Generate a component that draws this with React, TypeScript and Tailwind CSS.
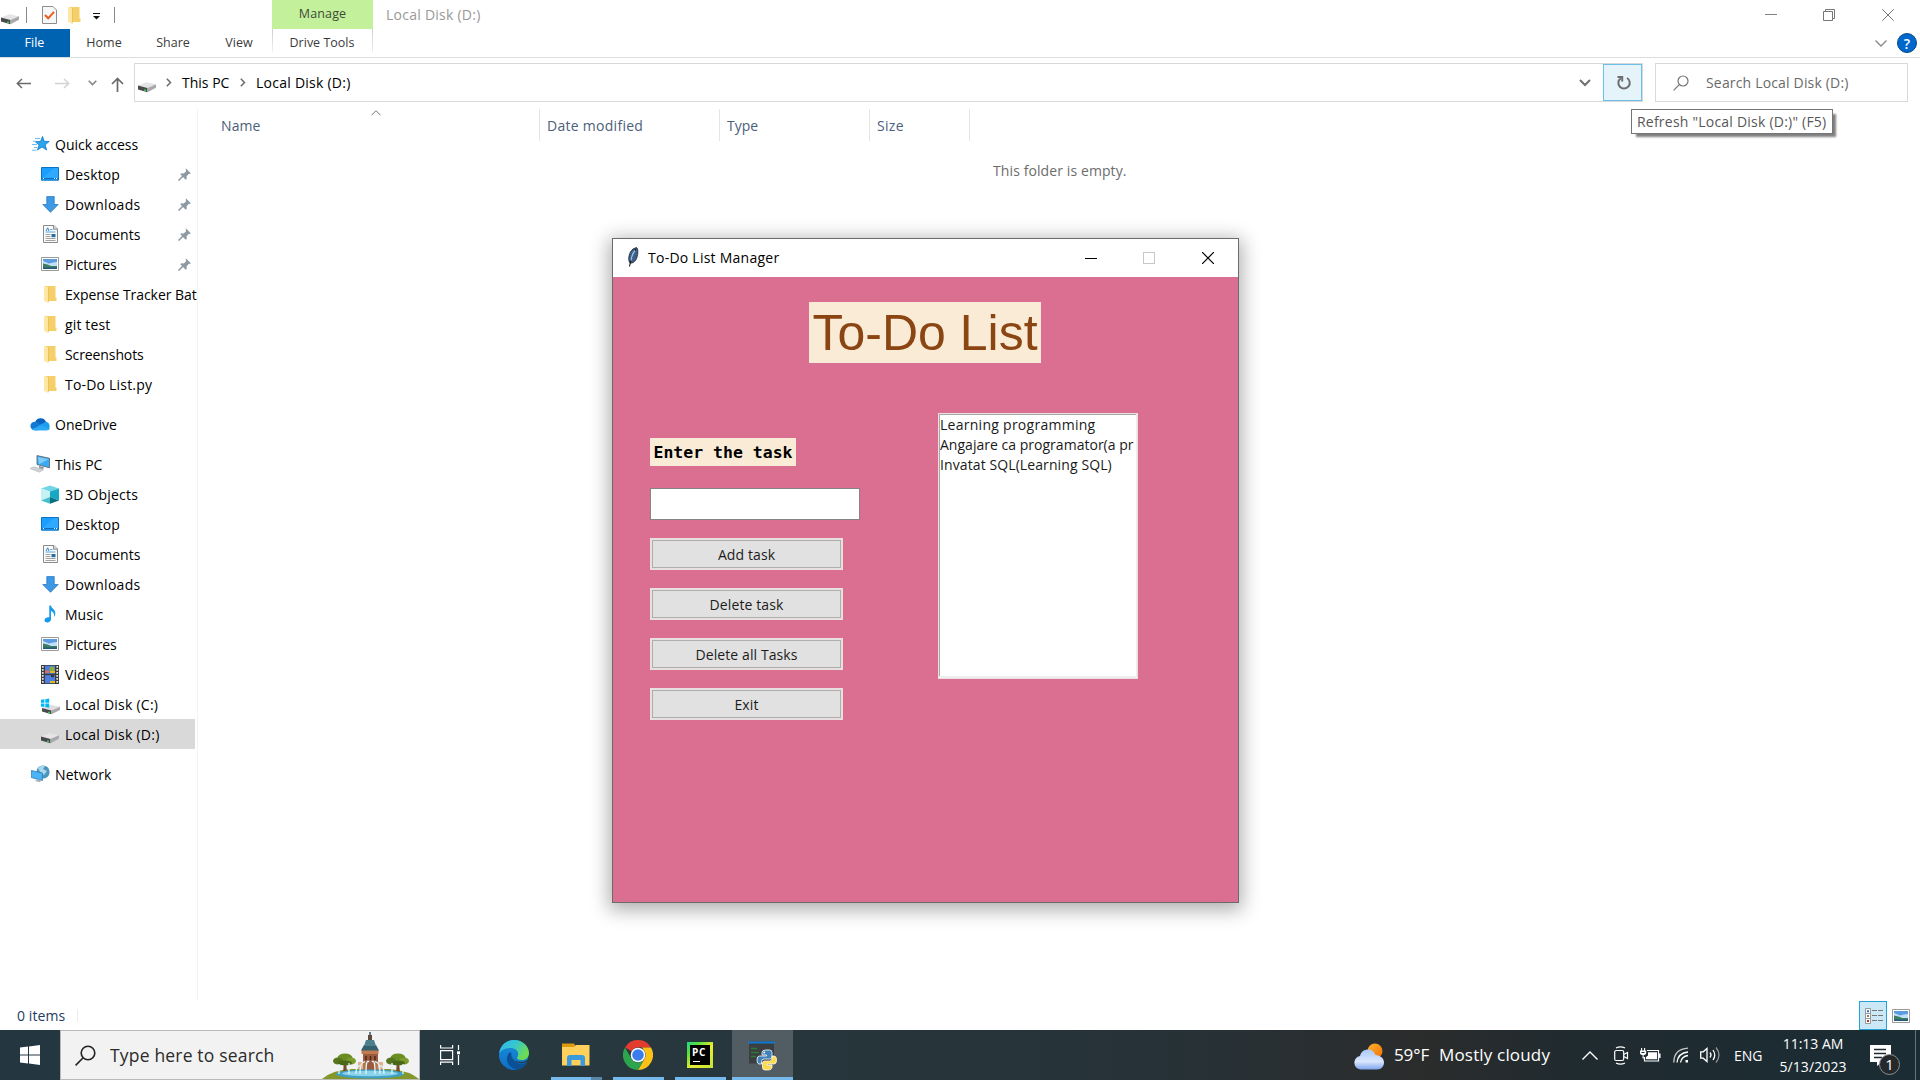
import React from "react";

type P = { className?: string };

const Drive = ({ className = "" }: P) => (
  <svg className={`h-5 w-[18px] shrink-0 ${className}`} viewBox="0 0 18 20">
    <path d="M0 10.5 8.5 7.2 18 9.2 9.5 13Z" fill="#e4e4e6" />
    <path d="M0 10.5 9.5 13v4.2L0 14.4Z" fill="#4a4a4c" />
    <path d="M9.5 13 18 9.2v3.6l-8.5 4.4Z" fill="#a9a9ad" />
    <path d="M6 14.6h2v1.5H6z" fill="#35d04a" />
  </svg>
);
const DriveC = () => (
  <svg className="h-5 w-[19px] shrink-0" viewBox="0 0 19 20">
    <path d="M1 12 9.5 8.7 19 10.7 10.5 14.5Z" fill="#dedee0" />
    <path d="M1 12 10.5 14.5v3.8L1 15.6Z" fill="#4a4a4c" />
    <path d="M10.5 14.5 19 10.7v3.4l-8.5 4.2Z" fill="#a9a9ad" />
    <path d="M7 15.8h2v1.4H7z" fill="#35d04a" />
    <path d="M0 3.800 3.400 3.300V6.700H0zM4.300 3.200 8.200 2.600V6.700H4.300zM0 7.600H3.400V11L0 10.500zM4.300 7.600H8.200V11.700L4.300 11.100z" fill="#00b7f1" />
  </svg>
);
const Folder = ({ className = "" }: P) => (
  <svg className={`h-[18px] w-[13px] shrink-0 ${className}`} viewBox="0 0 13 18">
    <path d="M2 1h9.500v11.500h1V16H4z" fill="#f5cf69" />
    <path d="M0 .5 4 2.500V18L0 15.800z" fill="#ffe7a3" />
    <path d="M4 2.500 5 2v14l-1 2z" fill="#e9c35c" />
  </svg>
);
const Star = () => (
  <svg className="h-[18px] w-[19px] shrink-0" viewBox="0 0 19 18">
    <path d="m11.500 1.500 1.700 4.800 5 .2-4 3.300 1.400 5.200-4.600-3L6.500 15l1.600-5-3.800-3.300 5.200-.3z" fill="#2ca4ee" stroke="#1279c4" strokeWidth=".8" />
    <path d="M4 3.500h5M2 6.300h3M1 9.500h5M3 12.500h3.500M1 15.200h4.500" stroke="#6cbcf0" strokeWidth="1" />
  </svg>
);
const Desktop = () => (
  <svg className="h-[14px] w-[18px] shrink-0" viewBox="0 0 18 14">
    <path d="M.5.5h17v12.700H.5z" fill="#1a9fff" stroke="#0c74c4" />
    <path d="m1 12 12-11H17v11z" fill="#3db0ff" opacity=".6" />
    <path d="M1 11.500h16" stroke="#0b6fbd" />
    <path d="M2 11.500h1M13 11.500h1M15 11.500h1" stroke="#fff" />
  </svg>
);
const Down = () => (
  <svg className="h-[17px] w-[17px] shrink-0" viewBox="0 0 17 17">
    <path d="M4.800.6h7.400v7.900h4L8.500 16.300.8 8.500h4z" fill="#3d99e6" stroke="#2a79c2" strokeWidth=".8" />
  </svg>
);
const Doc = () => (
  <svg className="h-[18px] w-[15px] shrink-0" viewBox="0 0 15 18">
    <path d="M.5.5h10.500l3.500 3.500v13.500H.5z" fill="#fbfbfb" stroke="#8b8b8b" />
    <path d="M10.500.8V4.200h3.700" fill="#ddd" stroke="#8b8b8b" />
    <path d="M3 6 4.700 2.800 6 6" fill="none" stroke="#2786cf" />
    <path d="M7 4.500h2.500M2.500 7h10" stroke="#55a5e0" />
    <path d="M2.500 9.500h5M2.500 11.500h5M2.500 13.500h10M2.500 15.500h10" stroke="#a2a2a2" />
    <path d="M8.500 9h4v3.200h-4z" fill="#2b6f9f" />
  </svg>
);
const Pic = () => (
  <svg className="h-[14px] w-[18px] shrink-0" viewBox="0 0 18 14">
    <path d="M.5.5h17v13H.5z" fill="#fff" stroke="#9a9a9a" />
    <path d="M2 2h14v10H2z" fill="#bfe0f8" />
    <path d="M2 2h14v3q-4 0-8 1.500L2 4z" fill="#5d9be0" />
    <path d="M2 6.500q5 .5 8 2.500h6v3H2z" fill="#3f7d63" />
    <path d="M2 10.500h14V12H2z" fill="#235a7c" />
  </svg>
);
const Cloud = () => (
  <svg className="h-[14px] w-[21px] shrink-0" viewBox="0 0 21 14">
    <path d="M5 6a5.700 5.700 0 0 1 10.800-1.500L18 8l-9 3z" fill="#0b63bd" />
    <path d="M4.500 13.300A4.300 4.300 0 0 1 5 4.700c2 0 3 .8 5 2.300l4 3-6 3.300z" fill="#1179d4" />
    <path d="M16 4.800a4.500 4.500 0 0 1 1 8.500H4.500C6 10 10 7.500 11.500 7z" fill="#1e9cee" />
    <path d="M1.700 12 12 8.500l8 3.300q-1.200 1.500-3 1.500H4.500q-1.800 0-2.800-1.300z" fill="#2ba9f5" />
  </svg>
);
const PC = () => (
  <svg className="h-[18px] w-[20px] shrink-0" viewBox="0 0 20 18">
    <path d="m7 .6 12.500 2.700v9.500L7 9.500z" fill="#3aa9f3" stroke="#5f6b75" strokeWidth=".9" />
    <path d="m8 2 10.500 2.200-9.500 5z" fill="#7fccfb" />
    <path d="m9 11 5 1.200-1 2-4-1z" fill="#8e959b" />
    <path d="m0 13.500 4-1.700 9.500 3-4 2.400z" fill="#cfd3d6" stroke="#a9adb0" strokeWidth=".5" />
  </svg>
);
const Cube = () => (
  <svg className="h-[19px] w-[18px] shrink-0" viewBox="0 0 18 19">
    <path d="M0 3.500 9 .5l9 3-9 3z" fill="#6fd6e2" />
    <path d="M0 3.500 9 6.500V12L0 15.500z" fill="#c4f2f4" />
    <path d="m9 6.500 9-3v12L9 12z" fill="#17a8c4" />
    <path d="m0 15.500 9-3.500v6.800z" fill="#45bfcb" />
    <path d="m9 12 9 3.500-9 3.300z" fill="#086f81" />
  </svg>
);
const Music = () => (
  <svg className="h-[18px] w-[12px] shrink-0" viewBox="0 0 12 18">
    <path d="M5.300.5H7c.3 3 4.800 4 4.300 8.500-.1 1.300-.6 2-1.300 2.700.6-3.300-.8-4.700-3-5.700v8.300c0 2-1.700 3.200-3.700 3.200C1.400 17.500.3 16.400.5 15c.2-1.900 2.500-3.200 4.800-2.700z" fill="#159aee" />
  </svg>
);
const Video = () => (
  <svg className="h-[19px] w-[18px] shrink-0" viewBox="0 0 18 19">
    <path d="M0 0h18v19H0z" fill="#3c3c3c" />
    <path d="M4 .8h10v8H4zM4 10.200h10v8H4z" fill="#4e7fe0" />
    <path d="M1.800 1v18M16.200 1v18" stroke="#e5e5e5" strokeWidth="1.700" strokeDasharray="1.700 1.300" />
    <circle cx="11" cy="4" r="2.500" fill="#8fae35" /><path d="M9 6h5v2H9zM9 16h5v2H9z" fill="#e2b622" />
    <path d="M4 5.500h4v2.500H4z" fill="#e56b61" /><path d="M10 10.200h3v2h-3z" fill="#333" />
  </svg>
);
const Network = () => (
  <svg className="h-[18px] w-[19px] shrink-0" viewBox="0 0 19 18">
    <circle cx="12" cy="7" r="6.600" fill="#4d95bd" />
    <path d="M7 3q5-4 7-2l-2 3 4 2-3 4-4-3z" fill="#a7d8ee" />
    <path d="m.4 5.500 11 2.500v7.500l-11-3z" fill="#4bb4f5" stroke="#2a7eb5" strokeWidth=".8" />
    <path d="m6 14.300 4 1-1 2-5-1.300z" fill="#aab4ba" />
  </svg>
);
const Pin = () => (
  <svg className="h-[13px] w-[13px] shrink-0" viewBox="0 0 13 13">
    <path d="M7.800.3 12.800 5.200l-1 .8-.9-.2-2.300 2.400.2 2.500-1.100 1L2.300 6.300l1-1 2.500.2 2.300-2.300-.3-1.100z" fill="#8d99a3" />
    <path d="m5 8-4.500 4.600" stroke="#8d99a3" strokeWidth="1.500" />
  </svg>
);
const Right = ({ className = "" }: P) => (
  <svg className={`h-[9px] w-[6px] shrink-0 ${className}`} viewBox="0 0 6 9" fill="none" stroke="#6b6b6b" strokeWidth="1.500">
    <path d="m.8.8 3.700 3.700L.8 8.200" />
  </svg>
);

type Row = { icon: React.ReactNode; label: string; cls?: string; pin?: boolean; root?: boolean; sel?: boolean; gap?: boolean };
const rows: Row[] = [
  { icon: <Star />, label: "Quick access", root: true },
  { icon: <Desktop />, label: "Desktop", pin: true, cls: "tracking-[0.15px]" },
  { icon: <Down />, label: "Downloads", pin: true, cls: "tracking-[0.27px]" },
  { icon: <Doc />, label: "Documents", pin: true, cls: "tracking-[0.07px]" },
  { icon: <Pic />, label: "Pictures", pin: true, cls: "tracking-[-0.1px]" },
  { icon: <Folder />, label: "Expense Tracker Bat", cls: "tracking-[-0.05px]" },
  { icon: <Folder />, label: "git test", cls: "tracking-[0.15px]" },
  { icon: <Folder />, label: "Screenshots", cls: "tracking-[-0.1px]" },
  { icon: <Folder />, label: "To-Do List.py", cls: "tracking-[0.2px]" },
  { icon: <Cloud />, label: "OneDrive", root: true, gap: true, cls: "tracking-[0.05px]" },
  { icon: <PC />, label: "This PC", root: true, gap: true },
  { icon: <Cube />, label: "3D Objects", cls: "tracking-[0.2px]" },
  { icon: <Desktop />, label: "Desktop", cls: "tracking-[0.15px]" },
  { icon: <Doc />, label: "Documents", cls: "tracking-[0.07px]" },
  { icon: <Down />, label: "Downloads", cls: "tracking-[0.27px]" },
  { icon: <Music />, label: "Music" },
  { icon: <Pic />, label: "Pictures", cls: "tracking-[-0.1px]" },
  { icon: <Video />, label: "Videos", cls: "tracking-[0.2px]" },
  { icon: <DriveC />, label: "Local Disk (C:)", cls: "tracking-[0.25px]" },
  { icon: <Drive />, label: "Local Disk (D:)", sel: true, cls: "tracking-[0.25px]" },
  { icon: <Network />, label: "Network", root: true, gap: true, cls: "tracking-[0.1px]" },
];

function TitleBar() {
  return (
    <div className="flex h-[29px] items-center">
      <div className="flex w-[272px] items-center">
        <Drive className="ml-px mt-1" />
        <div className="ml-[7px] h-4 w-px bg-[#8a8a8a]" />
        <svg className="ml-[15px] h-[18px] w-[15px]" viewBox="0 0 15 18">
          <path d="M.5.500h10.500l3.500 3.500v13.500H.5z" fill="#f6f7f9" stroke="#8d8d8d" />
          <path d="m3 9 3.200 3.300L12 5.800" fill="none" stroke="#ee5a1c" strokeWidth="2" />
        </svg>
        <Folder className="ml-[11px]" />
        <svg className="ml-[12px] mt-[3px] h-[7px] w-[7px]" viewBox="0 0 7 7">
          <path d="M0 .5h7" stroke="#111" /><path d="M0 3h7L3.500 6.500z" fill="#111" />
        </svg>
        <div className="ml-[14px] h-4 w-px bg-[#8a8a8a]" />
      </div>
      <div className="flex h-full w-[101px] items-center justify-center bg-[#c3f09b] pb-px text-[12.500px] tracking-[0.15px] text-[#3f4a38]">Manage</div>
      <div className="ml-[13px] flex-1 pb-px text-[14px] tracking-[0.25px] text-[#999]">Local Disk (D:)</div>
      <div className="flex items-center text-[#777]">
        <div className="h-px w-3 bg-[#808080]" />
        <svg className="ml-[46px] h-3 w-3" viewBox="0 0 12 12" fill="none" stroke="#777">
          <path d="M.5 2.500h9v9h-9zM2.500 2.500V.5h9v9h-2" />
        </svg>
        <svg className="ml-[47px] mr-[26px] h-3 w-3" viewBox="0 0 12 12" stroke="#777">
          <path d="m.3.300 11.400 11.400M11.700.3.300 11.700" />
        </svg>
      </div>
    </div>
  );
}

function Ribbon() {
  return (
    <div className="flex h-[29px] border-b border-[#dcdddd] text-[12.500px] text-[#3b3b3b]">
      <div className="flex w-[70px] items-center justify-center bg-[#0063b1] pr-px pt-px text-white">File</div>
      <div className="flex w-[68px] items-center justify-center pt-px">Home</div>
      <div className="flex w-[70px] items-center justify-center pt-px">Share</div>
      <div className="flex w-[62px] items-center justify-center pt-px">View</div>
      <div className="ml-[2px] flex w-[101px]">
        <div className="h-[23px] w-px bg-[linear-gradient(180deg,#cfcfcf,#f0f0f0)]" />
        <div className="flex flex-1 items-center justify-center pr-px pt-px">Drive Tools</div>
        <div className="h-[23px] w-px bg-[linear-gradient(180deg,#cfcfcf,#f0f0f0)]" />
      </div>
      <div className="flex-1" />
      <svg className="mr-[10px] mt-[11px] h-[7px] w-3 shrink-0" viewBox="0 0 12 7" fill="none" stroke="#8a8a8a" strokeWidth="1.400"><path d="m.5.500 5.500 5.500 5.500-5.500" /></svg>
      <div className="mr-[3px] mt-1 flex size-5 items-center justify-center rounded-full border border-[#0a4a86] bg-[#0067cc] text-[14px] font-semibold text-white">?</div>
    </div>
  );
}

function AddressBar() {
  return (
    <div className="flex h-[44px] items-end">
      <div className="flex h-[38px] w-[134px] items-center">
        <svg className="ml-4 h-[11px] w-[15px]" viewBox="0 0 15 11" fill="none" stroke="#6a6a6a" strokeWidth="1.500"><path d="M15 5.500H1.500M6 1 1.300 5.500 6 10" /></svg>
        <svg className="ml-6 h-[11px] w-[15px]" viewBox="0 0 15 11" fill="none" stroke="#d2d2d2" strokeWidth="1.500"><path d="M0 5.500h13.500M9 1l4.700 4.500L9 10" /></svg>
        <svg className="ml-[18px] h-[6px] w-[9px]" viewBox="0 0 9 6" fill="none" stroke="#888" strokeWidth="1.600"><path d="m.7.700 3.800 3.800L8.300.7" /></svg>
        <svg className="ml-[14px] mt-[3px] h-[15px] w-[13px]" viewBox="0 0 13 15" fill="none" stroke="#6a6a6a" strokeWidth="1.700"><path d="M6.500 15V1.500M1 7l5.500-5.600L12 7" /></svg>
      </div>
      <div className="flex h-[39px] w-[1509px] items-center border border-[#d9d9d9] text-[14px] text-black">
        <Drive className="ml-[3px] mt-1" />
        <Right className="ml-[10px]" />
        <div className="ml-[10px] w-[47px] whitespace-nowrap">This PC</div>
        <Right className="ml-[11px]" />
        <div className="ml-[10px] flex-1 tracking-[0.25px]">Local Disk (D:)</div>
        <svg className="mr-3 mt-px h-[8px] w-[12px]" viewBox="0 0 12 8" fill="none" stroke="#707070" strokeWidth="2"><path d="m1 1 5 5 5-5" /></svg>
        <div className="flex h-[37px] w-[39px] items-center justify-center border border-[#6dbfe8] bg-[#e5f3fb] pl-[2px] pt-px">
          <svg className="h-4 w-4" viewBox="0 0 16 16" fill="none" stroke="#6e6e6e" strokeWidth="2">
            <path d="M11 3a5.700 5.700 0 1 1-6.200.2" /><path d="M1.500 2h4.700v4.500" />
          </svg>
        </div>
      </div>
      <div className="ml-3 flex h-[39px] w-[253px] items-center border border-[#d9d9d9]">
        <svg className="ml-[17px] h-4 w-4" viewBox="0 0 16 16" fill="none" stroke="#757575" strokeWidth="1.200"><circle cx="10" cy="6" r="5" /><path d="M6.300 9.700.6 15.400" /></svg>
        <div className="ml-[17px] text-[14px] tracking-[0.17px] text-[#6a6a6a]">Search Local Disk (D:)</div>
      </div>
    </div>
  );
}

function Sidebar() {
  return (
    <div className="mt-[7px] h-[891px] w-[198px] border-r border-[#f3f3f3] pt-[20px]">
      <div className="w-[195px] text-[14px] text-black">
        {rows.map((r, i) => (
          <div key={i} className={`flex h-[30px] items-center ${r.gap ? "mt-[10px]" : ""} ${r.sel ? "bg-[#d9d9d9]" : ""}`}>
            <div className={`flex w-5 shrink-0 items-center justify-center ${r.root ? "ml-[30px]" : "ml-[40px]"} ${r.label.startsWith("Local") ? "pt-1" : ""}`}>{r.icon}</div>
            <div className={`ml-[5px] flex-1 whitespace-nowrap ${r.cls ?? ""}`}>{r.label}</div>
            {r.pin && <div className="mr-[4px]"><Pin /></div>}
          </div>
        ))}
      </div>
    </div>
  );
}

function Content() {
  return (
    <div className="flex flex-1 flex-col pt-[7px]">
      <div className="flex h-[32px] text-[14px] text-[#4c607a]">
        <div className="flex w-[342px] border-r border-[#e5e5e5]">
          <div className="ml-[23px] w-[150px] pt-[6px] tracking-[0.1px]">Name</div>
          <svg className="mt-px h-[6px] w-[10px]" viewBox="0 0 10 6" fill="none" stroke="#777"><path d="m.5 5.200 4.500-4.500 4.500 4.500" /></svg>
        </div>
        <div className="w-[180px] border-r border-[#e5e5e5] pl-[7px] pt-[6px] tracking-[0.28px]">Date modified</div>
        <div className="w-[150px] border-r border-[#e5e5e5] pl-[7px] pt-[6px]">Type</div>
        <div className="w-[100px] border-r border-[#e5e5e5] pl-[7px] pt-[6px] tracking-[0.3px]">Size</div>
      </div>
      <div className="ml-[795px] mt-[19px] text-[14px] tracking-[0.1px] text-[#6d6d6d]">This folder is empty.</div>
    </div>
  );
}

function TaskButton({ label }: { label: string }) {
  return (
    <div className="mb-[18px] flex h-8 w-[193px] border-2 border-[#e8dfe1] bg-[#e1e1e1]">
      <div className="flex flex-1 items-center justify-center border border-[#adadad] text-[14px] tracking-[0.1px] text-[#1c1c1c]">{label}</div>
    </div>
  );
}

function TodoWindow() {
  return (
    <div className="absolute left-[612px] top-[238px] flex h-[665px] w-[627px] flex-col border border-[#6b6b6b] bg-[#db6f91] shadow-[0_4px_18px_3px_rgba(0,0,0,0.32)]">
      <div className="flex h-[38px] items-center bg-white text-black">
        <svg className="ml-[13px] mb-[2px] h-5 w-[13px]" viewBox="0 0 13 20">
          <path d="M10.500.5c2 1 1.700 8.500-.8 12.500-1.500 2.400-4 3.500-5.700 3C1.500 13 3 5 7 2z" fill="#3c5f8c" stroke="#242c36" strokeWidth=".9" />
          <path d="M10 2C6 6 5 12 3.500 19.500" stroke="#171717" fill="none" strokeWidth="1.100" />
          <path d="M9 3.500C7 6 5.500 10 5 13.500" stroke="#9cc0e8" fill="none" strokeWidth="1.400" />
        </svg>
        <div className="ml-[9px] flex-1 pb-[2px] text-[14px] tracking-[0.25px]">To-Do List Manager</div>
        <div className="h-px w-3 bg-black" />
        <div className="ml-[46px] size-3 border border-[#c8c8c8]" />
        <svg className="ml-[47px] mr-[24px] size-3" viewBox="0 0 12 12" stroke="#000" strokeWidth="1.200"><path d="m0 0 12 12M12 0 0 12" /></svg>
      </div>
      <div className="flex h-[147px] pt-[25px]">
        <div className="ml-[196px] flex h-[61px] w-[232px] items-center justify-center whitespace-nowrap bg-[#faebd7] font-['Liberation_Sans'] text-[50px] leading-none text-[#8b4513]">To-Do List</div>
      </div>
      <div className="flex">
        <div className="ml-[37px] w-[288px] pt-[14px]">
          <div className="flex h-7 w-[146px] items-center justify-center whitespace-nowrap bg-[#faebd7] pt-[2px] font-['DejaVu_Sans_Mono'] text-[16.5px] font-bold text-black">Enter the task</div>
          <div className="mb-[18px] mt-[22px] h-8 w-[210px] border border-[#848484] bg-white" />
          <TaskButton label="Add task" />
          <TaskButton label="Delete task" />
          <TaskButton label="Delete all Tasks" />
          <TaskButton label="Exit" />
        </div>
        <div className="mt-[-11px] flex h-[266px] w-[200px] border border-[#ecdfe3] bg-[#eee]">
          <div className="mb-[2px] mr-px flex-1 whitespace-nowrap border-l border-t border-[#a9a9a9] bg-white text-[14px] leading-5 text-[#1a1a1a]">
            <div className="tracking-[0.27px]">Learning programming</div>
            <div className="tracking-[0.02px]">Angajare ca programator(a pr</div>
            <div className="tracking-[0.1px]">Invatat SQL(Learning SQL)</div>
          </div>
        </div>
      </div>
    </div>
  );
}

const Tree = ({ x }: { x: number }) => (
  <g transform={`translate(${x} 0)`}>
    <path d="M11 30 10 42h4l-1-12z" fill="#7a4c26" />
    <ellipse cx="12" cy="27" rx="7.500" ry="4.500" fill="#6b8e23" />
    <ellipse cx="5" cy="30" rx="5" ry="3.500" fill="#55761c" />
    <ellipse cx="18" cy="30" rx="5" ry="3.500" fill="#7b9c2c" />
    <ellipse cx="12" cy="32" rx="7" ry="2.500" fill="#4a6818" />
  </g>
);

function SearchArt() {
  return (
    <svg className="h-[48px] w-[97px] shrink-0" viewBox="0 0 97 48">
      <path d="M0 48Q10 39 30 38h38q20 2 29 10z" fill="#84972b" />
      <path d="M41 19h15v22H41z" fill="#9a5a3e" />
      <path d="M39.500 19h17v4h-17z" fill="#c27a50" />
      <path d="M42 14h12l3 5.500H39z" fill="#35606d" />
      <path d="M44 9h8l2 6H42z" fill="#4b7f8c" />
      <path d="M47.300 1h1.500v7h-1.500z" fill="#31535d" />
      <path d="M46 4h4v5h-4z" fill="#5a4a40" />
      <path d="M44 25v4M48.500 25v4M53 25v4" stroke="#4d2717" strokeWidth="1.500" />
      <path d="M36 31h8v9h-8zM53 31h8v9h-8z" fill="#d0894f" opacity=".6" />
      <Tree x={11} /><Tree x={64} />
      <ellipse cx="48" cy="43" rx="34" ry="4.500" fill="#3fa0c8" />
      <ellipse cx="48" cy="42.500" rx="28" ry="2.800" fill="#8bd3ea" />
      <path d="M17 43V33M27 43V32M70 43V32M81 43V33M38 43q0-13 5-12M58 43q0-13-5-12M44 43q0-16 3-12M53 43q0-16-3-12M34 43q0-9 4-8M62 43q0-9-4-8" stroke="#dff4fb" strokeWidth="1.300" fill="none" />
    </svg>
  );
}

function Taskbar() {
  return (
    <div className="flex h-[50px] bg-[linear-gradient(90deg,#243740_0%,#28383f_30%,#263238_60%,#2b2c2c_74%,#202b30_82%,#1b2c34_100%)] text-white">
      <div className="flex w-[60px] items-center justify-center">
        <svg className="size-5" viewBox="0 0 20 20" fill="#fff"><path d="M0 2.600 8 1.500V9.500H0zM9 1.400 20 0v9.500H9zM0 10.500h8v8L0 17.400zM9 10.500h11V20L9 18.600z" /></svg>
      </div>
      <div className="flex w-[360px] items-center border border-[#b9b9b9] bg-[#f2f2f2] text-[#2b2b2b]">
        <svg className="ml-[14px] size-[21px]" viewBox="0 0 21 21" fill="none" stroke="#222" strokeWidth="1.600"><circle cx="13" cy="8" r="6.800" /><path d="M8.200 12.800.6 20.400" /></svg>
        <div className="ml-[14px] flex-1 whitespace-nowrap text-[17.500px] tracking-[0.18px]">Type here to search</div>
        <SearchArt />
      </div>
      <div className="flex w-[60px] items-center justify-center">
        <svg className="ml-[-1px] h-[20px] w-5" viewBox="0 0 20 20" fill="none" stroke="#fff" strokeWidth="1.200"><path d="M.6 5.600h12v9H.6zM.6 0v3h12V0M.6 20v-2.800h12V20M18.500 0v5M18.500 10v10" /><path d="M17 6.300h3v3h-3z" fill="#fff" stroke="none" /></svg>
      </div>
      <div className="flex w-[68px] items-center justify-center">
        <svg className="size-[30px]" viewBox="0 0 30 30">
          <defs>
            <linearGradient id="eg" x1="0" y1="0" x2="1" y2=".5"><stop offset="0" stopColor="#2fb5ec" /><stop offset=".5" stopColor="#35c6d2" /><stop offset="1" stopColor="#6fdc50" /></linearGradient>
            <linearGradient id="eb" x1="0" y1="0" x2="0" y2="1"><stop offset="0" stopColor="#1b8fdc" /><stop offset="1" stopColor="#0d6fc4" /></linearGradient>
          </defs>
          <circle cx="15" cy="15" r="15" fill="url(#eb)" />
          <path d="M.2 13.500C1 5.500 7.500 0 15 0c9 0 15 6.500 15 13 0 4.500-3.500 7-7 7-3 0-5-1-5-2 0-.8 1.200-1.500 1.200-4C19.200 10.500 16 8 11.500 8 6 8 1.500 10.500.2 13.500z" fill="url(#eg)" />
          <path d="M11.500 12C7 15 6.500 22 11.500 26.500 14.500 29.200 18 30 19.500 29.300 23 28.300 26 26 28 22.500c-2 .8-4 1.200-6 1.200C16 23.700 11.500 18 12.500 14z" fill="#0b4f96" />
          <path d="M13 13.500c-.8 3 1 6.500 4.500 7.700 4 1.400 8 .8 11-1.200L30 15v6l-1.500 1q-5 1.800-9 .8c-5-1.300-7.500-5.500-6.500-9.300z" fill="#263840" />
        </svg>
      </div>
      <div className="flex w-[56px] flex-col items-center">
        <svg className="mt-[13px] h-[23px] w-7" viewBox="0 0 28 23">
          <path d="M0 .5h12l2 3.500H0z" fill="#dd9a0c" /><path d="M0 4h12l2-2h13.500v20.500H0z" fill="#ffd15c" />
          <path d="M5 23V15q0-3 3-3h12q3 0 3 3v8h-4.500v-6h-9v6z" fill="#3a9ae0" />
        </svg>
        <div className="mt-[11px] flex h-[3px] w-[51px]"><div className="w-10 bg-[#76b9ed]" /><div className="flex-1 bg-[#5a86a8]" /></div>
      </div>
      <div className="ml-[6px] flex w-[56px] flex-col items-center">
        <svg className="mt-[10px] size-[30px]" viewBox="0 0 30 30">
          <path d="M2 7.500A15 15 0 0 1 28 7.500H15A7.500 7.500 0 0 0 8.500 11.300z" fill="#e33b2e" />
          <path d="M28 7.500A15 15 0 0 1 15 30l6.500-11.200A7.500 7.500 0 0 0 21.500 11.200L19 7.500z" fill="#fbc116" />
          <path d="M2 7.500A15 15 0 0 0 15 30l6.500-11.200A7.500 7.500 0 0 1 8.500 18.800z" fill="#2da44e" />
          <circle cx="15" cy="15" r="7.300" fill="#fff" /><circle cx="15" cy="15" r="5.800" fill="#3b7ded" />
        </svg>
        <div className="mt-[7px] h-[3px] w-[51px] bg-[#76b9ed]" />
      </div>
      <div className="ml-[6px] flex w-[56px] flex-col items-center">
        <div className="mt-[12px] flex size-[26px] items-center justify-center bg-[linear-gradient(135deg,#21d789_0%,#5be03a_25%,#e6ee2f_55%,#c6e334_100%)]">
          <div className="relative size-[20px] bg-black pl-[2px] pt-px text-[10px] font-bold leading-[13px] tracking-[0.6px] text-white">PC<div className="absolute bottom-[3px] left-[3px] h-px w-[7px] bg-white" /></div>
        </div>
        <div className="mt-[9px] h-[3px] w-[51px] bg-[#76b9ed]" />
      </div>
      <div className="ml-[4px] flex w-[61px] flex-col items-center bg-[#525d63]">
        <svg className="mt-[11px] h-[30px] w-[29px]" viewBox="0 0 29 30">
          <path d="M1 .5h25v22H1z" fill="#3b3f42" /><path d="M0 .5h27v2H0z" fill="#0f7ad4" />
          <path d="M3 7.500h6M3 11.500h8M3 15.500h5" stroke="#2c7b35" strokeWidth="1.300" />
          <path d="M18 9h3.500q2.500 0 2.500 2.500V16q0 2-2 2h-6q-2.500 0-2.500 2.500V23h-2.500Q9 23 9 19t2.500-4h7v-1H14v-2.500Q14 9 18 9z" fill="#3f82b9" stroke="#fff" strokeWidth=".8" />
          <path d="M19.500 29H17q-2.500 0-2.500-2.500V22q0-2 2-2h5Q24 20 24 17.500V15h2q2.500 0 2.500 4T26 23h-7v1h5v2q0 3-4.500 3z" fill="#ffd94c" stroke="#fff" strokeWidth=".8" />
          <circle cx="16.200" cy="11.500" r=".9" fill="#fff" />
        </svg>
        <div className="mt-[6px] h-[3px] w-full bg-[#76b9ed]" />
      </div>
      <div className="flex-1" />
      <div className="flex h-full w-[566px] shrink-0 items-center">
        <div className="flex w-[218px] shrink-0 items-center pb-px">
          <svg className="mt-[4px] h-[27px] w-[30px] shrink-0" viewBox="0 0 30 27">
            <defs>
              <linearGradient id="cl" x1="0" y1="0" x2="0" y2="1"><stop offset="0" stopColor="#a9c9fb" /><stop offset=".6" stopColor="#d9e6fd" /><stop offset="1" stopColor="#7fa5ee" /></linearGradient>
              <linearGradient id="sun" x1="0" y1="0" x2="1" y2="1"><stop offset="0" stopColor="#fcb52b" /><stop offset="1" stopColor="#f26f0c" /></linearGradient>
            </defs>
            <circle cx="21" cy="8" r="7.500" fill="url(#sun)" />
            <path d="M7 26.500a6.800 6.800 0 0 1-1-13.500C7 8.500 10.500 6.500 14 6.500c4 0 6.500 2.500 7.300 5.500 5 .3 8.700 3.300 8.700 7.500s-3 7-7 7z" fill="url(#cl)" />
          </svg>
          <div className="ml-[10px] w-[45px] shrink-0 whitespace-nowrap text-[17px] tracking-[-0.1px]">59°F</div>
          <div className="whitespace-nowrap text-[17px] tracking-[0.17px]">Mostly cloudy</div>
        </div>
        <svg className="ml-[10px] h-[9px] w-4 shrink-0" viewBox="0 0 16 9" fill="none" stroke="#fff" strokeWidth="1.400"><path d="m.5 8.500 7.500-7.500 7.500 7.500" /></svg>
        <svg className="ml-[16px] h-[19px] w-[15px] shrink-0" viewBox="0 0 15 19" fill="none" stroke="#fff" strokeWidth="1.200"><rect x=".7" y="4.500" width="9" height="10" rx="1.500" /><path d="m9.700 8.500 3.800-2v6l-3.800-2M2 2Q6.500-.2 11 2M2 17Q6.500 19.200 11 17" /></svg>
        <svg className="ml-[11px] h-[14px] w-[21px] shrink-0" viewBox="0 0 21 14" fill="none" stroke="#fff"><path d="M7 2.500h11.500v10.500H4.500V9" strokeWidth="1.200" /><path d="M8 4.300h9v7H6V9l2-1.500z" fill="#fff" stroke="none" /><path d="M19.800 5.500v4.500" strokeWidth="1.500" /><path d="M1.600 0v3M4.600 0v3" strokeWidth="1.100" /><path d="M0 2.500h6.200V5q0 2-3.100 2T0 5z" fill="#fff" stroke="none" /><path d="M1.500 4h3v1h-3z" fill="#1d2b31" stroke="none" /><path d="M3.100 7v3h2" strokeWidth="1.100" /></svg>
        <svg className="ml-[12px] h-[16px] w-[16px] shrink-0" viewBox="0 0 16 16" fill="none" stroke="#fff" strokeWidth="1.300"><path d="M.8 15.500Q1 2 15 1.200" opacity=".75" /><path d="M4 15.500Q5 6 15 5M7.500 15.500Q8.500 9.500 15 8.500" /><path d="M12.500 13h2.500v2.500h-2.500z" fill="#fff" stroke="none" /></svg>
        <svg className="ml-[11px] h-[18px] w-[21px] shrink-0" viewBox="0 0 21 18" fill="none" stroke="#fff" strokeWidth="1.300"><path d="M.7 5.800h2.500L7 2.500v13L3.200 12.200H.7z" /><path d="M10 6.500q2 2.500 0 5M13 4q3.500 5 0 10" /><path d="M16 1.500q6 7.500 0 15" opacity=".5" /></svg>
        <div className="ml-[13px] w-[32px] text-[14px]">ENG</div>
        <div className="ml-[5px] flex w-[84px] shrink-0 flex-col items-center whitespace-nowrap text-[14px] leading-[23px]">
          <div className="tracking-[-0.02px]">11:13 AM</div><div className="tracking-[0.1px]">5/13/2023</div>
        </div>
        <div className="relative ml-[15px] h-5 w-[21px]">
          <svg className="h-[21px] w-[21px]" viewBox="0 0 21 21"><path d="M0 0h21v17h-9l-5 4v-4H0z" fill="#fff" /><path d="M4 4.500h12M4 8.500h12M4 12.500h8" stroke="#1d2b31" strokeWidth="1.300" /></svg>
          <div className="absolute left-[9px] top-[9px] flex size-[21px] items-center justify-center rounded-full border border-[#8b9094] bg-[#26292b] text-[15px] leading-none">1</div>
        </div>
        <div className="ml-[24px] h-full w-px bg-[#69757a]" />
      </div>
    </div>
  );
}

export default function App() {
  return (
    <div className="relative flex h-[1080px] w-[1920px] flex-col overflow-hidden bg-white font-['Open_Sans','Noto_Sans',sans-serif]">
      <TitleBar />
      <Ribbon />
      <AddressBar />
      <div className="flex h-[899px]">
        <Sidebar />
        <Content />
      </div>
      <div className="flex h-[29px] items-center text-[14px] text-[#1e3c5f]">
        <div className="ml-[17px] w-[60px] tracking-[0.1px]">0 items</div>
        <div className="h-[13px] w-px bg-[#ececec]" />
        <div className="flex-1" />
        <div className="flex h-[29px] w-[28px] items-center justify-center border border-[#26a0da] bg-[#cbe8f6] pl-[2px]">
          <svg className="h-4 w-[19px] shrink-0" viewBox="0 0 19 16" fill="none"><path d="M.5.5h5v15h-5zM.5 5.500h5M.5 10.500h5" fill="#fff" stroke="#999" /><path d="M2 2.200h2v2H2z" fill="#2f73c0" /><path d="M2 7h2v2H2z" fill="#9a7b4e" /><path d="M2 12h2v2H2z" fill="#c62f2f" /><path d="M7 2.500h5M13 2.500h5M7 7.500h5M13 7.500h5M7 12.500h5M13 12.500h5" stroke="#777" /></svg>
        </div>
        <div className="ml-[5px] mr-[10px]"><Pic /></div>
      </div>
      <Taskbar />
      <div className="absolute left-[1631px] top-[109px] flex h-[25px] w-[202px] items-center whitespace-nowrap border border-[#767676] bg-white pl-[5px] text-[14px] tracking-[0.22px] text-[#575757] shadow-[4px_4px_2px_-1px_rgba(0,0,0,0.5)]">Refresh "Local Disk (D:)" (F5)</div>
      <TodoWindow />
    </div>
  );
}
